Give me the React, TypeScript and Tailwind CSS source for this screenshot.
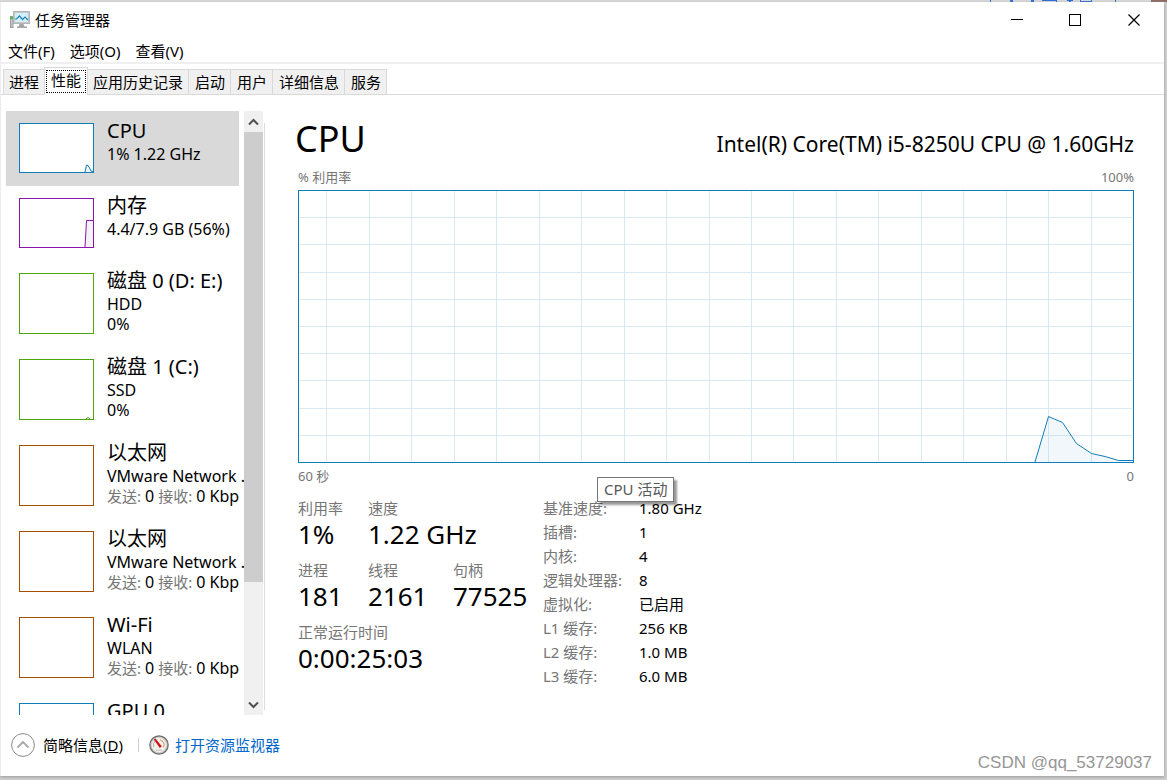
import React from "react";

const SANS = "font-['Noto_Sans','Noto_Sans_CJK_SC',sans-serif]";

type Device = {
  name: string;
  lines: React.ReactNode[];
  color: string;
  short?: boolean;
  active?: boolean;
  spark?: React.ReactNode;
};

const Traffic = () => (
  <>
    <span className="text-[15px] text-[#767676]">发送: </span>0{" "}
    <span className="text-[15px] text-[#767676]">接收: </span>0 Kbp
  </>
);

const devices: Device[] = [
  {
    name: "CPU",
    lines: ["1% 1.22 GHz"],
    color: "border-[#117dbb]",
    short: true,
    active: true,
    spark: (
      <path d="M65 48 L66.5 41 L68 41.5 L69.5 44 L71 47 L73 47.5" fill="#f1f6fa" stroke="#117dbb" strokeWidth="1" />
    ),
  },
  {
    name: "内存",
    lines: ["4.4/7.9 GB (56%)"],
    color: "border-[#8b12ae]",
    short: true,
    spark: (
      <>
        <path d="M65 48 L66.5 21.5 H73 V48 Z" fill="#f4f2f4" />
        <path d="M65 48 L66.5 21.5 H73" fill="none" stroke="#8b12ae" strokeWidth="1" />
      </>
    ),
  },
  { name: "磁盘 0 (D: E:)", lines: ["HDD", "0%"], color: "border-[#4da60c]" },
  {
    name: "磁盘 1 (C:)",
    lines: ["SSD", "0%"],
    color: "border-[#4da60c]",
    spark: <path d="M66 59 L68 57.5 L70 59" fill="none" stroke="#4da60c" strokeWidth="1" />,
  },
  { name: "以太网", lines: ["VMware Network .", <Traffic />], color: "border-[#a74f01]" },
  { name: "以太网", lines: ["VMware Network .", <Traffic />], color: "border-[#a74f01]" },
  { name: "Wi-Fi", lines: ["WLAN", <Traffic />], color: "border-[#a74f01]" },
  { name: "GPU 0", lines: [], color: "border-[#117dbb]" },
];

const tabs = ["进程", "性能", "应用历史记录", "启动", "用户", "详细信息", "服务"];
const menus = ["文件(F)", "选项(O)", "查看(V)"];

const tabPadding = (i: number) => {
  if (i === 0) return "border-l px-[5px]";
  if (i === 2) return "border-r px-[5px]";
  return "border-r pl-[6px] pr-[5px]";
};

const stats = [
  [
    { label: "利用率", value: "1%" },
    { label: "速度", value: "1.22 GHz" },
  ],
  [
    { label: "进程", value: "181" },
    { label: "线程", value: "2161" },
    { label: "句柄", value: "77525" },
  ],
  [{ label: "正常运行时间", value: "0:00:25:03" }],
];

const details = [
  ["基准速度:", "1.80 GHz"],
  ["插槽:", "1"],
  ["内核:", "4"],
  ["逻辑处理器:", "8"],
  ["虚拟化:", "已启用"],
  ["L1 缓存:", "256 KB"],
  ["L2 缓存:", "1.0 MB"],
  ["L3 缓存:", "6.0 MB"],
];

function AppIcon() {
  return (
    <svg width="20" height="18" viewBox="0 0 20 18" aria-hidden="true">
      <rect x="0.5" y="5.5" width="2.500" height="11" fill="#c4c7c9" stroke="#9a9da0" />
      <rect x="0" y="6" width="3" height="2" fill="#3fc63f" />
      <path d="M9.500 13h4l1 2.500h2.500V17H7v-1.500h1.500z" fill="#a4a7a9" />
      <rect x="3.500" y="0.500" width="16" height="12" fill="#c3c6c8" stroke="#b3b6b8" />
      <rect x="5" y="2" width="13" height="9" fill="#d2f0fb" />
      <path d="M5 8h1.500l3-3 3 3.500 2.500-2.500 3 3" fill="none" stroke="#2585bd" strokeWidth="1.200" />
    </svg>
  );
}

function GaugeIcon() {
  return (
    <svg width="20" height="20" viewBox="0 0 20 20" aria-hidden="true">
      <circle cx="10" cy="10" r="9.200" fill="#b9b8b5" stroke="#6f6f6f" strokeWidth="1.200" />
      <circle cx="10" cy="10" r="7.500" fill="#f4f2ef" stroke="#d7d5d1" strokeWidth="0.800" />
      <path d="M5 12a5.300 5.300 0 0 1 1-6" fill="none" stroke="#b3b0aa" />
      <path d="M11 4.800a5.300 5.300 0 0 1 3.500 7.700" fill="none" stroke="#e3a27e" strokeWidth="1.300" />
      <path d="M4.800 4.600l1.700-1 6.300 7.600-2 1.800z" fill="#cf1414" />
      <path d="M7 15.200h6" stroke="#cfcdc8" strokeWidth="1.500" />
    </svg>
  );
}

function Chevron({ down }: { down?: boolean }) {
  return (
    <svg width="11" height="8" viewBox="0 0 11 8" aria-hidden="true">
      <path
        d={down ? "M1 1.500l4.500 4.500L10 1.500" : "M1 6.500L5.500 2L10 6.500"}
        fill="none"
        stroke="#505050"
        strokeWidth="2"
      />
    </svg>
  );
}

const usageLine = "M737 272 L750.5 226.5 L764.5 232.5 L778.5 253.5 L793.5 263.5 L807 266.5 L820.5 270.5 H835";

function UsageChart() {
  const columns = Array.from({ length: 19 }, (_, i) => Math.round(28.3 + i * 42.47) + 0.5);
  const rows = Array.from({ length: 9 }, (_, i) => Math.round((i + 1) * 27.2) + 0.5);
  return (
    <svg
      className="block h-[273px] w-full"
      viewBox="0 0 836 273"
      preserveAspectRatio="none"
      role="img"
      aria-label="CPU 利用率"
    >
      <g stroke="#d9eaf4" strokeWidth="1">
        {columns.map((x) => (
          <line key={x} x1={x} x2={x} y1="1" y2="272" />
        ))}
        {rows.map((y) => (
          <line key={y} x1="1" x2="834" y1={y} y2={y} />
        ))}
      </g>
      <path d={`${usageLine} V272 Z`} fill="#117dbb" fillOpacity="0.06" />
      <path d={usageLine} fill="none" stroke="#117dbb" strokeWidth="1" />
      <rect x="0.5" y="0.5" width="835" height="272" fill="none" stroke="#117dbb" />
    </svg>
  );
}

function Sidebar() {
  return (
    <aside className="flex min-h-0 w-[264px] shrink-0 pl-[5px]">
      <ul className="min-w-0 flex-1 overflow-hidden">
        {devices.map((d, i) => (
          <li key={i}>
            <button
              className={`flex w-[233px] items-start pl-[13px] text-left whitespace-nowrap ${
                d.short ? "h-[75px]" : "h-[86px]"
              } ${d.active ? "bg-[#d9d9d9]" : ""}`}
            >
              <span className={`mt-3 w-[75px] shrink-0 border bg-white ${d.color} ${d.short ? "h-[50px]" : "h-[61px]"}`}>
                {d.spark && (
                  <svg width="73" height={d.short ? 48 : 59} aria-hidden="true">
                    {d.spark}
                  </svg>
                )}
              </span>
              <span className="mt-[6px] ml-[13px]">
                <span className="block text-[20px] leading-[27px]">{d.name}</span>
                {d.lines.map((l, j) => (
                  <span key={j} className="block h-5 text-[16px] leading-5 whitespace-pre">
                    {l}
                  </span>
                ))}
              </span>
            </button>
          </li>
        ))}
      </ul>
      <div className="flex w-[19px] shrink-0 flex-col bg-[#f0f0f0]">
        <button aria-label="向上滚动" className="flex h-[21px] items-center justify-center">
          <Chevron />
        </button>
        <div className="flex-1">
          <div className="h-4/5 bg-[#cdcdcd]" />
        </div>
        <button aria-label="向下滚动" className="flex h-[21px] items-center justify-center">
          <Chevron down />
        </button>
      </div>
      <div className="mt-3 mb-[5px] ml-px w-px shrink-0 bg-[#dcdcdc]" />
    </aside>
  );
}

export default function App() {
  return (
    <div className={`${SANS} flex h-screen flex-col overflow-hidden bg-[#cfcfcf] text-black`}>
      <div className="flex h-[2px] shrink-0 justify-end bg-[#dadada]">
        <svg width="180" height="2" viewBox="0 0 180 2" aria-hidden="true">
          <path
            d="M3 0h1v2h-1zM23 0h3v2h-3zM44 0h3v2h-3zM55 0h14v1h-14zM82 0h2v2h-2zM69 0h1v2h-1zM80 0h6v1h-6zM93 0h1v2h-1zM104 0h1v2h-1zM93 1h12v1h-12zM128 0h1v2h-1z"
            fill="#2a6ad8"
          />
          <rect x="164" width="16" height="2" fill="#8d6a63" />
        </svg>
      </div>
      <div className="mr-[3px] mb-1 flex min-h-0 flex-1 flex-col border-l border-[#ececec] bg-white shadow-[0_1px_3px_#999999]">
        <header className="flex h-[36px] shrink-0 items-center justify-between">
          <h1 className="flex items-center gap-[5px] pl-[9px] text-[15px]">
            <AppIcon />
            任务管理器
          </h1>
          <div className="flex">
            <button aria-label="最小化" className="flex h-[35px] w-[59px] items-center justify-center">
              <svg width="12" height="12">
                <path d="M0 5.500h12" stroke="#000" />
              </svg>
            </button>
            <button aria-label="最大化" className="flex h-[35px] w-[58px] items-center justify-center">
              <svg width="12" height="12">
                <rect x="0.500" y="0.500" width="11" height="11" fill="none" stroke="#000" />
              </svg>
            </button>
            <button aria-label="关闭" className="flex h-[35px] w-[60px] items-center justify-center">
              <svg width="12" height="12">
                <path d="M0.500 0.500l11 11M11.500 0.500l-11 11" stroke="#000" strokeWidth="1.200" />
              </svg>
            </button>
          </div>
        </header>
        <nav className="flex h-[26px] shrink-0 items-center gap-[15px] border-b-2 border-[#f0f0f0] pt-0.5 pl-[7px] text-[15px]">
          {menus.map((m) => (
            <button key={m}>{m}</button>
          ))}
        </nav>
        <div role="tablist" className="flex h-[31px] shrink-0 items-end border-b border-[#d9d9d9] pl-[2px] text-[15px]">
          {tabs.map((t, i) =>
            i === 1 ? (
              <button
                key={t}
                role="tab"
                aria-selected="true"
                className="-mb-px h-7 border border-b-0 border-[#d9d9d9] bg-white px-px"
              >
                <span className="flex h-[23px] items-center border border-dotted border-black px-1 pb-0.5">{t}</span>
              </button>
            ) : (
              <button
                key={t}
                role="tab"
                aria-selected="false"
                className={`h-[25px] border-t border-[#d9d9d9] bg-[#f0f0f0] ${tabPadding(i)}`}
              >
                {t}
              </button>
            ),
          )}
        </div>
        <div className="flex min-h-0 flex-1 pt-4">
          <Sidebar />
          <main className="relative min-w-0 flex-1 overflow-hidden pr-[30px] pl-[33px]">
            <div className="-ml-[3px] flex h-14 items-center justify-between">
              <h2 className="text-[36px] leading-[56px]">CPU</h2>
              <p className="pt-[10px] text-[21px] leading-[28px]">Intel(R) Core(TM) i5-8250U CPU @ 1.60GHz</p>
            </div>
            <div className="flex h-[23px] items-center justify-between pb-0.5 text-[13px] text-[#767676]">
              <span>% 利用率</span>
              <span>100%</span>
            </div>
            <UsageChart />
            <div className="flex h-[26px] items-center justify-between pt-0.5 text-[13px] text-[#767676]">
              <span>60 秒</span>
              <span>0</span>
            </div>
            <div className="flex pt-[7px]">
              <div className="flex w-[245px] flex-col gap-[10px]">
                {stats.map((row, i) => (
                  <dl key={i} className="flex">
                    {row.map((s, j) => (
                      <div key={s.label} className={`whitespace-nowrap ${j === 0 ? "w-[70px]" : "w-[85px]"}`}>
                        <dt className="text-[15px] leading-6 text-[#767676]">{s.label}</dt>
                        <dd className="text-[26px] leading-[28px]">{s.value}</dd>
                      </div>
                    ))}
                  </dl>
                ))}
              </div>
              <dl className="text-[15px] leading-6">
                {details.map(([k, v]) => (
                  <div key={k} className="flex">
                    <dt className="w-24 text-[#767676]">{k}</dt>
                    <dd>{v}</dd>
                  </div>
                ))}
              </dl>
            </div>
            <div
              role="tooltip"
              className="absolute top-[366px] left-[332px] border border-[#767676] bg-white px-[6px] text-[15px] leading-[23px] whitespace-nowrap text-[#575757] shadow-[3px_3px_2px_#00000066]"
            >
              CPU 活动
            </div>
          </main>
        </div>
        <footer className="flex h-[61px] shrink-0 items-center pb-px pl-[10px] text-[15px]">
          <button className="flex items-center gap-2">
            <svg width="24" height="24" viewBox="0 0 24 24" aria-hidden="true">
              <circle cx="12" cy="12" r="11.400" fill="none" stroke="#8a8a8a" />
              <path d="M6.500 14.500L12 9l5.500 5.500" fill="none" stroke="#a8a8a8" strokeWidth="1.800" />
            </svg>
            <span>
              简略信息(<u>D</u>)
            </span>
          </button>
          <span className="mr-[10px] ml-[15px] h-[14px] w-px bg-[#d0d0d0]" />
          <a href="#resmon" className="flex items-center gap-[6px] text-[#0066cc]">
            <GaugeIcon />
            打开资源监视器
          </a>
          <span className="mt-9 ml-auto pr-3 font-['Liberation_Sans',sans-serif] text-[17px] text-[#969696]">
            CSDN @qq_53729037
          </span>
        </footer>
      </div>
    </div>
  );
}
